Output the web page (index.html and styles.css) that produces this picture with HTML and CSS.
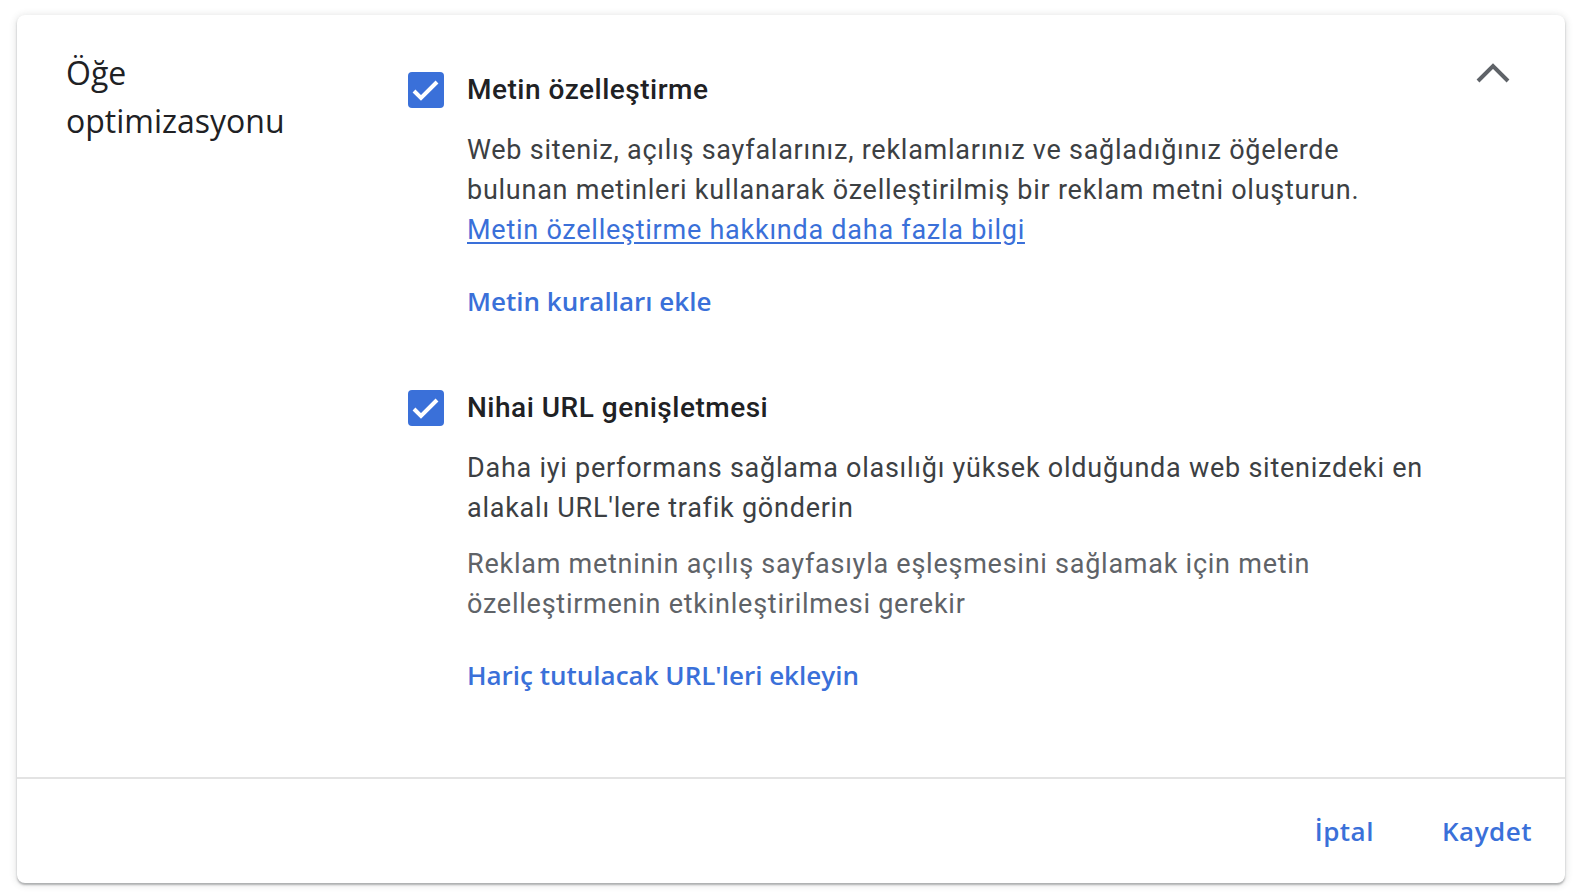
FILE: index.html
```html
<!DOCTYPE html>
<html lang="tr">
<head>
  <meta charset="UTF-8">
  <title>Öğe optimizasyonu</title>
  <link rel="stylesheet" href="styles.css">
</head>
<body>
  <div class="card">
    <div class="card-body">
      <h2 class="section-title">Öğe optimizasyonu</h2>

      <div class="options">
        <div class="option">
          <span class="checkbox">
            <svg viewBox="0 0 36 36" width="36" height="36"><polyline points="6,19 13,26 29,10" /></svg>
          </span>
          <div class="option-text">
            <div class="option-title">Metin özelleştirme</div>
            <p class="desc">
              Web siteniz, açılış sayfalarınız, reklamlarınız ve sağladığınız öğelerde bulunan metinleri kullanarak özelleştirilmiş bir reklam metni oluşturun.
              <a href="#" class="learn-more">Metin özelleştirme hakkında daha fazla bilgi</a>
            </p>
            <a href="#" class="action-link">Metin kuralları ekle</a>
          </div>
        </div>

        <div class="option">
          <span class="checkbox">
            <svg viewBox="0 0 36 36" width="36" height="36"><polyline points="6,19 13,26 29,10" /></svg>
          </span>
          <div class="option-text">
            <div class="option-title">Nihai URL genişletmesi</div>
            <p class="desc">Daha iyi performans sağlama olasılığı yüksek olduğunda web sitenizdeki en alakalı URL'lere trafik gönderin</p>
            <p class="hint">Reklam metninin açılış sayfasıyla eşleşmesini sağlamak için metin özelleştirmenin etkinleştirilmesi gerekir</p>
            <a href="#" class="action-link">Hariç tutulacak URL'leri ekleyin</a>
          </div>
        </div>
      </div>

      <button class="collapse-btn" type="button" aria-label="Daralt">
        <svg viewBox="0 0 48 48" width="48" height="48"><polyline points="9,32 24,17 39,32" /></svg>
      </button>
    </div>

    <div class="card-footer">
      <button type="button" class="text-btn">İptal</button>
      <button type="button" class="text-btn">Kaydet</button>
    </div>
  </div>
</body>
</html>
```

FILE: styles.css
```css
body {
  margin: 0;
  padding: 15px 19px 10px 17px;
  background: #fff;
  font-family: Roboto, "Liberation Sans", Arial, sans-serif;
  color: #3c4043;
}

.card {
  background: #fff;
  border-radius: 8px;
  box-shadow: 0 2px 2px rgba(60, 64, 67, 0.35), 0 1px 7px 1px rgba(60, 64, 67, 0.15);
  height: 868px;
  display: flex;
  flex-direction: column;
}

.card-body {
  flex: 1;
  display: grid;
  grid-template-columns: 342px 1fr 48px;
  padding: 34px 48px 0 49px;
  border-bottom: 2px solid #e3e3e3;
}

/* headings and buttons use the wider UI face */
.section-title,
.action-link,
.text-btn {
  font-family: "Open Sans", Roboto, sans-serif;
}

.section-title {
  margin: 0;
  width: 260px;
  font-size: 32px;
  font-weight: 400;
  line-height: 48px;
  color: #202124;
}

.options {
  padding-top: 23px;
}

.option {
  display: flex;
  gap: 23px;
  margin-bottom: 69px;
}

.checkbox {
  flex: none;
  width: 36px;
  height: 36px;
  border-radius: 4px;
  background: #3a70d9;
}

.checkbox svg {
  display: block;
  fill: none;
  stroke: #fff;
  stroke-width: 4;
}

.option-text {
  max-width: 968px;
}

.option-title {
  font-size: 28px;
  font-weight: 500;
  letter-spacing: 0.5px;
  line-height: 36px;
  color: #202124;
  margin-bottom: 22px;
}

.desc, .hint {
  margin: 0;
  font-size: 27px;
  letter-spacing: 0.75px;
  line-height: 40px;
}

.hint {
  margin-top: 16px;
  color: #5f6368;
}

.learn-more {
  display: inline-block;
  color: #3a70d9;
  text-decoration: underline;
  text-underline-offset: 3px;
}

.action-link {
  display: inline-block;
  margin-top: 31px;
  font-size: 26px;
  font-weight: 600;
  line-height: 40px;
  color: #3a70d9;
  text-decoration: none;
}

.collapse-btn {
  align-self: start;
  width: 48px;
  height: 48px;
  padding: 0;
  border: none;
  background: none;
  cursor: pointer;
}

.collapse-btn svg {
  display: block;
  fill: none;
  stroke: #5f6368;
  stroke-width: 4;
}

.card-footer {
  height: 104px;
  display: flex;
  justify-content: flex-end;
  align-items: center;
  gap: 68px;
  padding-right: 33px;
}

.text-btn {
  border: none;
  background: none;
  padding: 8px 0;
  font-size: 26px;
  font-weight: 600;
  letter-spacing: 0.5px;
  color: #3a70d9;
  cursor: pointer;
}
```
